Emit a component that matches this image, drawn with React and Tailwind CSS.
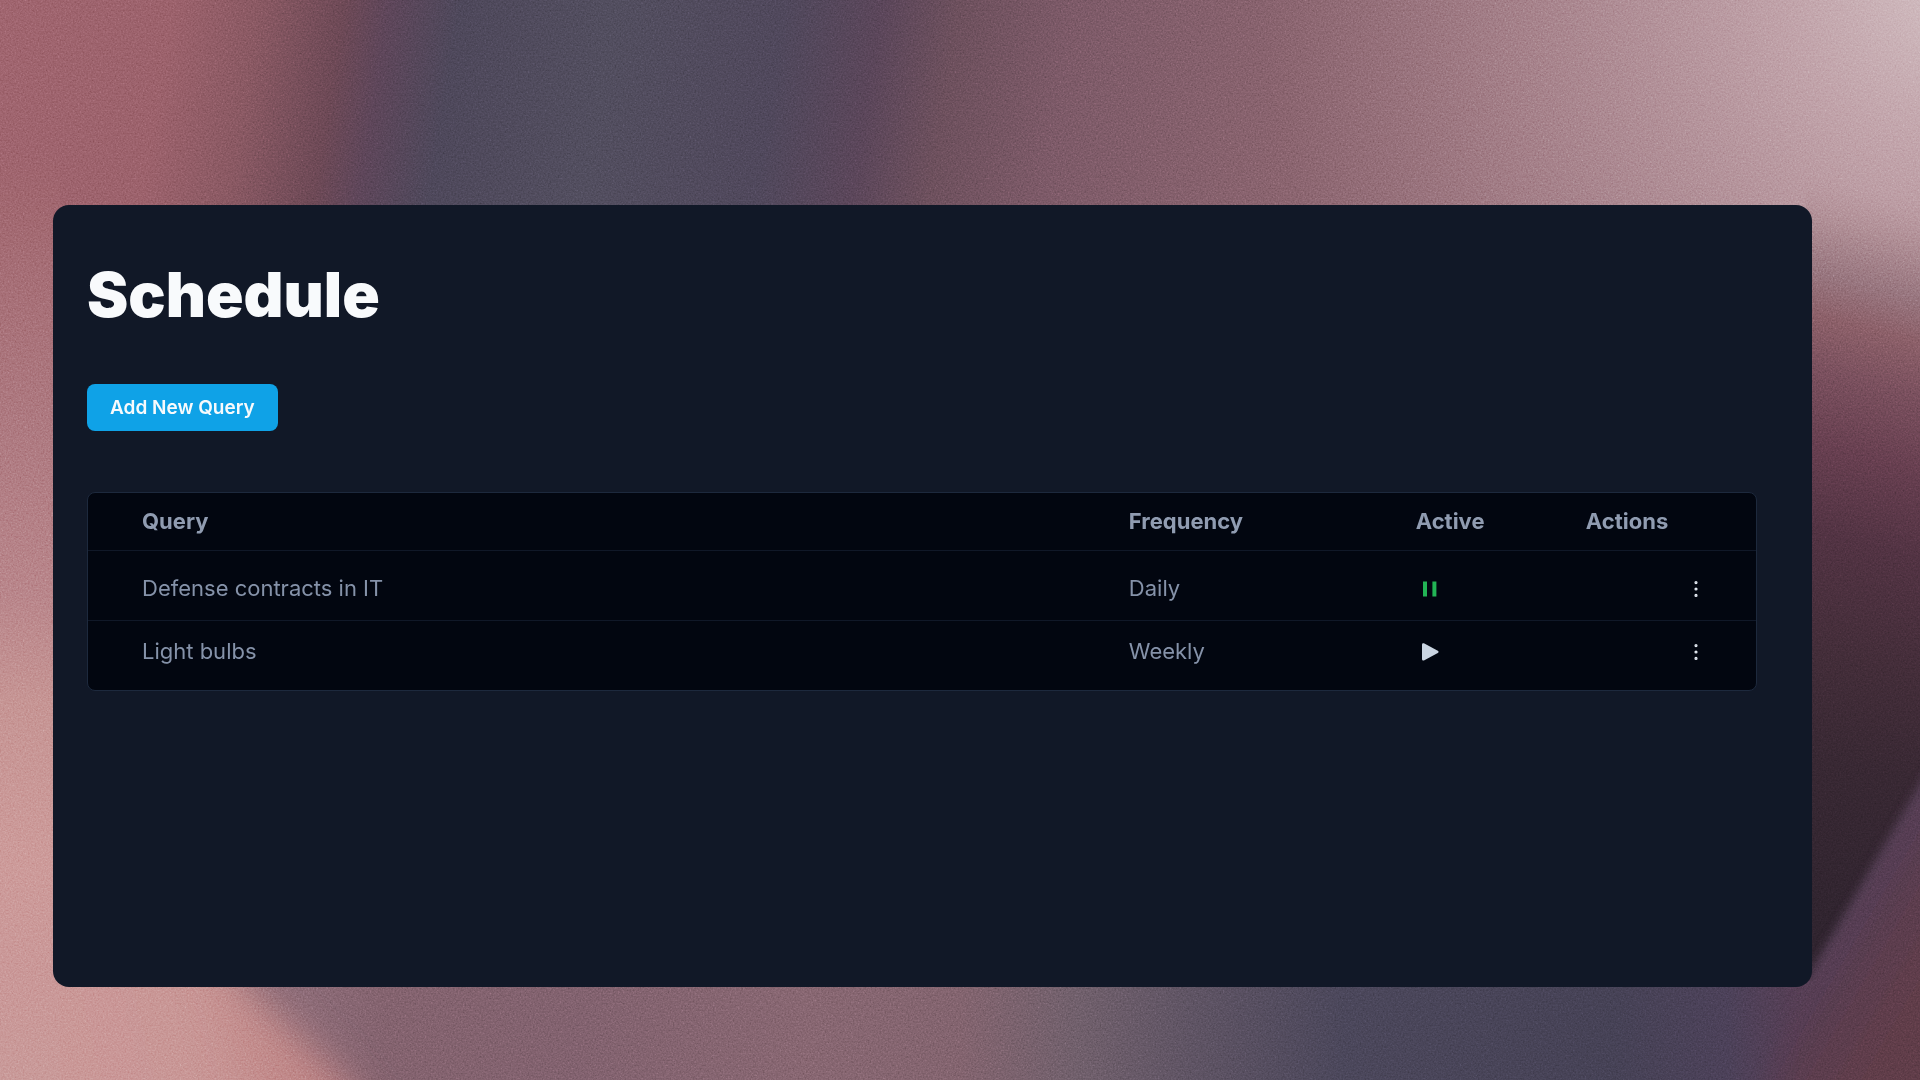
import React from 'react';
import { MoreVertical } from 'lucide-react';

const queries = [
  { name: 'Defense contracts in IT', frequency: 'Daily', active: true },
  { name: 'Light bulbs', frequency: 'Weekly', active: false },
];

const topStops = [
  [0, '#a0656f'], [0.09, '#9c626c'], [0.135, '#8a5963'], [0.18, '#6d4956'], [0.203, '#5e465a'],
  [0.24, '#4e485b'], [0.32, '#524e5f'], [0.41, '#50485c'], [0.46, '#5b465a'], [0.5, '#6d505d'],
  [0.56, '#7d5a68'], [0.68, '#8a646f'], [0.8, '#97707a'], [1, '#a5818a'],
];

const leftStops = [
  [0.14, '#a2696f', 0], [0.24, '#a56d75', 1], [0.4, '#ae7a81', 1], [0.55, '#b9868b', 1],
  [0.65, '#c69594', 1], [0.8, '#cd9b9a', 1], [0.9, '#ca9898', 1], [1, '#c99a99', 1],
];

const rightStops = [
  [0.16, '#b8979e', 0], [0.2, '#b08f96', 1], [0.25, '#98767f', 1], [0.29, '#8c6069', 1], [0.34, '#7a505e', 1],
  [0.41, '#673f50', 1], [0.49, '#523343', 1], [0.6, '#432d39', 1], [0.7, '#382833', 1], [0.85, '#30242f', 1],
];

const bottomStops = [
  [0, '#8e6d78'], [0.16, '#8c6b77'], [0.2, '#84636f'],
  [0.3, '#82626f'], [0.42, '#886772'], [0.5, '#83646f'], [0.56, '#71606c'], [0.62, '#5f5464'], [0.7, '#4b475b'],
  [0.84, '#464256'], [0.9, '#4c4159'], [0.94, '#573e54'], [1, '#643c49'],
];

function Stops({ items }) {
  return items.map(([offset, color, opacity = 1]) => (
    <stop key={offset} offset={offset} stopColor={color} stopOpacity={opacity} />
  ));
}

// Soft mauve wallpaper with a fine grain
function Wallpaper() {
  return (
    <svg
      className="absolute inset-0 h-full w-full"
      viewBox="0 0 1920 1080"
      preserveAspectRatio="none"
      aria-hidden="true"
    >
      <defs>
        <linearGradient id="top" gradientUnits="userSpaceOnUse" x1="0" y1="0" x2="1920" y2="0" gradientTransform="skewX(-9)">
          <Stops items={topStops} />
        </linearGradient>
        <radialGradient id="glow" gradientUnits="userSpaceOnUse" cx="1960" cy="-20" r="700">
          <stop offset="0" stopColor="#d3c0c3" />
          <stop offset="0.25" stopColor="#c9adb3" stopOpacity="0.8" />
          <stop offset="1" stopColor="#b08c94" stopOpacity="0" />
        </radialGradient>
        <linearGradient id="left" gradientUnits="userSpaceOnUse" x1="0" y1="0" x2="0" y2="1080">
          <Stops items={leftStops} />
        </linearGradient>
        <linearGradient id="right" gradientUnits="userSpaceOnUse" x1="0" y1="0" x2="0" y2="1080" gradientTransform="skewY(14) translate(0 -450)">
          <Stops items={rightStops} />
        </linearGradient>
        <linearGradient id="bottom" gradientUnits="userSpaceOnUse" x1="0" y1="0" x2="1920" y2="0">
          <Stops items={bottomStops} />
        </linearGradient>
        <linearGradient id="blush" gradientUnits="userSpaceOnUse" x1="0" y1="1030" x2="300" y2="960">
          <stop offset="0" stopColor="#ca9898" />
          <stop offset="0.6" stopColor="#c99796" />
          <stop offset="1" stopColor="#bd8283" />
        </linearGradient>
        <linearGradient id="corner" gradientUnits="userSpaceOnUse" x1="1800" y1="920" x2="1920" y2="990">
          <stop offset="0" stopColor="#50425a" />
          <stop offset="0.5" stopColor="#593c50" />
          <stop offset="1" stopColor="#603c4a" />
        </linearGradient>
        <linearGradient id="cornerFade" gradientUnits="userSpaceOnUse" x1="1740" y1="0" x2="1840" y2="0">
          <stop offset="0" stopColor="#fff" stopOpacity="0" />
          <stop offset="0.6" stopColor="#fff" />
        </linearGradient>
        <mask id="cornerMask" maskUnits="userSpaceOnUse" x="1700" y="600" width="220" height="480">
          <rect x="1700" y="600" width="220" height="480" fill="url(#cornerFade)" />
        </mask>
        <filter id="soft" x="-20%" y="-20%" width="140%" height="140%">
          <feGaussianBlur stdDeviation="5" />
        </filter>
        <filter id="softer" x="-20%" y="-20%" width="140%" height="140%">
          <feGaussianBlur stdDeviation="18" />
        </filter>
        <filter id="grain" x="0" y="0" width="100%" height="100%" colorInterpolationFilters="sRGB">
          <feTurbulence type="fractalNoise" baseFrequency="0.6" numOctaves="2" seed="4" />
          <feColorMatrix type="saturate" values="0" />
        </filter>
      </defs>
      <rect width="1920" height="600" fill="url(#top)" />
      <rect width="1920" height="800" fill="url(#glow)" />
      <rect y="600" width="1920" height="480" fill="url(#bottom)" />
      <path d="M-80 900H190L250 987L345 1080L400 1160H-80Z" fill="url(#blush)" filter="url(#softer)" />
      <rect width="60" height="1080" fill="url(#left)" />
      <rect x="1805" width="115" height="980" fill="url(#right)" />
      <g mask="url(#cornerMask)">
        <path d="M1960 715 L1805 982 L1740 1120 L1960 1120 Z" fill="url(#corner)" filter="url(#soft)" />
      </g>
      <rect className="mix-blend-overlay" width="1920" height="1080" filter="url(#grain)" opacity="0.5" />
    </svg>
  );
}

function PauseIcon() {
  return (
    <svg className="h-5 w-5 fill-[#22b455]" viewBox="0 0 20 20" aria-hidden="true">
      <path d="M3 2.5h4v15H3zM12.4 2.5h4v15h-4z" />
    </svg>
  );
}

function PlayIcon() {
  return (
    <svg className="h-5 w-5 fill-slate-300" viewBox="0 0 20 20" aria-hidden="true">
      <path d="M2 2.8C2 1.4 3.2 1 4.4 1.5L17.8 8.8C18.8 9.4 18.8 10.4 17.8 11L4.4 18.3C3.2 18.8 2 18.4 2 17Z" />
    </svg>
  );
}

function QueryRow({ query }) {
  return (
    <tr className="h-[70px] border-t border-gray-900 first:[&>td]:pt-[7px] last:[&>td]:pb-[7px]">
      <td className="pl-[54px]">{query.name}</td>
      <td>{query.frequency}</td>
      <td>
        <button
          type="button"
          aria-label={query.active ? 'Pause query' : 'Resume query'}
          className="ml-1 flex items-center"
        >
          {query.active ? <PauseIcon /> : <PlayIcon />}
        </button>
      </td>
      <td className="pr-[49px]">
        <button type="button" aria-label="Query actions" className="ml-auto flex items-center">
          <MoreVertical className="h-[22px] w-[22px] text-slate-200" strokeWidth={1.5} />
        </button>
      </td>
    </tr>
  );
}

export default function App() {
  return (
    <div className="relative flex min-h-screen flex-col overflow-hidden bg-[#4e495c] pt-[205px] pr-[108px] pb-[93px] pl-[53px] font-['Inter',sans-serif]">
      <Wallpaper />
      <main className="relative flex-1 rounded-2xl bg-[#111827] pt-[60px] pr-[55px] pb-16 pl-[34px]">
        <h1 className="text-[62px] leading-[60px] font-black text-slate-50">Schedule</h1>
        <button
          type="button"
          className="mt-[59px] h-[47px] rounded-lg bg-[#0fa2e7] px-[23px] pt-[2px] text-[19px] font-semibold text-slate-50"
        >
          Add New Query
        </button>
        <div className="mt-[61px] overflow-hidden rounded-lg border border-slate-800 bg-[#020610]">
          <table className="w-full table-fixed text-left text-[22px] text-[#8592a9]">
            <thead>
              <tr className="h-[57px] text-[#909cb1]">
                <th className="w-[62.4%] pl-[54px] font-bold">Query</th>
                <th className="w-[17.2%] font-bold">Frequency</th>
                <th className="w-[10.2%] font-bold">Active</th>
                <th className="font-bold">Actions</th>
              </tr>
            </thead>
            <tbody>
              {queries.map((query) => (
                <QueryRow key={query.name} query={query} />
              ))}
            </tbody>
          </table>
        </div>
      </main>
    </div>
  );
}
